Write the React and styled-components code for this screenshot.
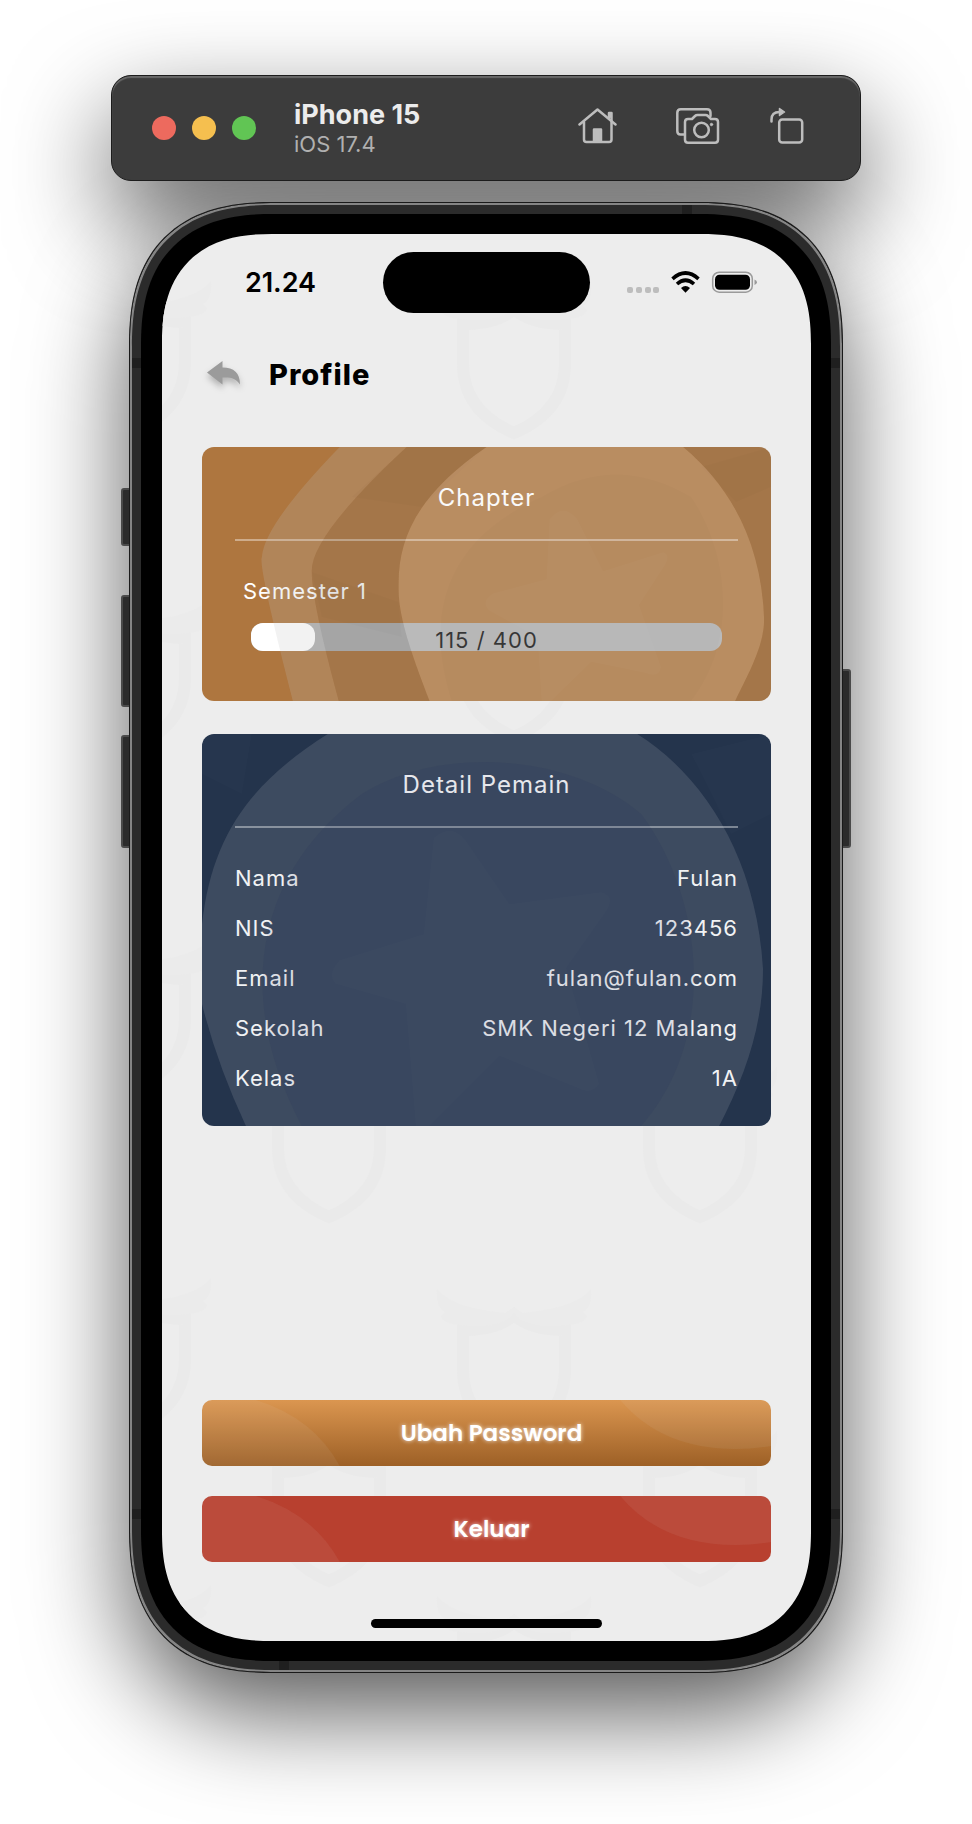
import React from 'react';
import styled, { createGlobalStyle } from 'styled-components';

const Global = createGlobalStyle`
  *, *::before, *::after { box-sizing: border-box; }
  body { margin: 0; background: #fff; font-family: Inter, "Liberation Sans", sans-serif; }
  button { font: inherit; border: 0; padding: 0; background: none; cursor: pointer; }
`;

const Page = styled.main`
  display: flex;
  flex-direction: column;
  align-items: center;
  gap: 21px;
  min-height: 100vh;
  padding: 75px 109px 151px 109px;
  overflow: hidden;
`;

const Toolbar = styled.header`
  position: relative;
  display: flex;
  align-items: center;
  align-self: stretch;
  height: 106px;
  margin: 0 2px;
  padding: 0 56px 0 40px;
  border-radius: 20px;
  border: 1px solid #1c1c1c;
  background: #3c3c3c;
  box-shadow: inset 0 2px 1px #686868;

  &::before {
    content: '';
    position: absolute;
    z-index: -1;
    inset: 0;
    border-radius: 20px;
    box-shadow: 0 40px 100px rgba(0, 0, 0, 0.66);
  }
`;

const Lights = styled.div`
  display: flex;
  gap: 16px;
`;

const Light = styled.button`
  width: 24px;
  height: 24px;
  border-radius: 50%;
  && { background: ${(p) => p.$color}; }
`;

const DeviceName = styled.div`
  flex: 1;
  margin: 2px 0 0 38px;
`;

const DeviceTitle = styled.h1`
  margin: 0;
  font-size: 27px;
  line-height: 30px;
  font-weight: 700;
  color: #ececec;
`;

const DeviceOs = styled.p`
  margin: 0;
  font-size: 22px;
  line-height: 28px;
  color: #b0b0b0;
`;

const Tools = styled.div`
  display: flex;
  align-items: center;
  gap: 50px;
  padding-bottom: 4px;
`;

const Tool = styled.button`
  display: flex;
  svg { display: block; }
`;

const corner = (radius, continuous) => `
  border-radius: ${radius}px;
  @supports (corner-shape: superellipse(1.3)) {
    border-radius: ${continuous}px;
    corner-shape: superellipse(1.3);
  }
`;

const Phone = styled.section`
  position: relative;
  align-self: stretch;
  margin: 0 20px;
  padding: 11px;
  border: 1px solid #1a1a1a;
  background: #2b2b2b;
  box-shadow: inset 0 0 0 2px #858585;
  ${corner(128, 144)}

  &::before {
    content: '';
    position: absolute;
    z-index: -1;
    inset: 0;
    border-radius: 128px;
    box-shadow: 0 40px 100px rgba(0, 0, 0, 0.66);
  }
`;

const SideKey = styled.span`
  position: absolute;
  z-index: -1;
  ${(p) => p.$side}: -9px;
  top: ${(p) => p.$top}px;
  width: 12px;
  height: ${(p) => p.$height}px;
  border: 2px solid #4a4a4a;
  border-radius: 3px;
  background: #2b2b2b;
`;

const Antenna = styled.span`
  position: absolute;
  background: #1f1f1f;
  ${(p) => p.$edge}: 2px;
  ${(p) => p.$from}: ${(p) => p.$at}px;
  width: ${(p) => (p.$edge === 'top' || p.$edge === 'bottom' ? 10 : 9)}px;
  height: ${(p) => (p.$edge === 'top' || p.$edge === 'bottom' ? 9 : 10)}px;
`;

const Bezel = styled.div`
  position: relative;
  padding: 20px 20px 20px 21px;
  background: #000;
  ${corner(117, 132)}
`;

const Screen = styled.div`
  position: relative;
  z-index: 0;
  display: flex;
  flex-direction: column;
  min-height: 1407px;
  padding: 18px 40px 13px;
  background: #ededed;
  overflow: hidden;
  ${corner(97, 110)}
`;

const Watermark = styled.svg`
  position: absolute;
  z-index: -1;
  inset: 0;
  width: 100%;
  height: 100%;
`;

const StatusBar = styled.div`
  display: grid;
  grid-template-columns: 1fr 207px 1fr;
  align-items: center;
  height: 61px;
`;

const Clock = styled.time`
  justify-self: center;
  padding-right: 24px;
  font-size: 27px;
  line-height: 32px;
  font-weight: 600;
  color: #000;
`;

const Island = styled.div`
  height: 61px;
  border-radius: 31px;
  background: #000;
`;

const StatusIcons = styled.div`
  display: flex;
  align-items: center;
  padding-left: 36px;
`;

const TitleBar = styled.header`
  display: flex;
  align-items: center;
  gap: 28px;
  margin-top: 44px;
  padding-left: 5px;
  height: 36px;
`;

const BackButton = styled.button`
  display: flex;
  padding-bottom: 4px;
  svg { filter: drop-shadow(0 4px 3px rgba(0, 0, 0, 0.25)); overflow: visible; }
`;

const ScreenTitle = styled.h2`
  margin: 0;
  font-size: 29px;
  line-height: 38px;
  font-weight: 800;
  letter-spacing: 1px;
  color: #000;
`;

const Card = styled.section`
  position: relative;
  isolation: isolate;
  overflow: hidden;
  height: ${(p) => p.$height}px;
  margin-top: ${(p) => p.$gap}px;
  padding: 32px 33px;
  border-radius: 12px;
  background: ${(p) => p.$color};
  color: #fff;
  letter-spacing: 1px;
`;

const Art = styled.svg`
  position: absolute;
  z-index: 1;
  inset: 0;
  width: 100%;
  height: 100%;
  pointer-events: none;
`;

const CardTitle = styled.h3`
  margin: 0;
  padding-bottom: 22px;
  border-bottom: 2px solid rgba(255, 255, 255, 0.4);
  font-size: 24px;
  line-height: 38px;
  font-weight: 400;
  text-align: center;
`;

const ChapterBody = styled.div`
  padding: 34px 16px 0;
`;

const ChapterName = styled.div`
  margin-left: -8px;
  font-size: 22px;
  line-height: 32px;
`;

const Track = styled.div`
  position: relative;
  height: 28px;
  margin-top: 16px;
  border-radius: 12px;
  background: #afafaf;
`;

const Fill = styled.div`
  height: 28px;
  border-radius: 12px;
  background: #fff;
`;

const Score = styled.span`
  position: absolute;
  inset: 0;
  font-size: 22px;
  line-height: 34px;
  text-align: center;
  color: #0a0a0a;
`;

const Details = styled.dl`
  margin: 0;
  padding-top: 25px;
  font-size: 22px;
  line-height: 50px;
  color: #f2f3f5;
`;

const DetailRow = styled.div`
  display: flex;
  justify-content: space-between;
  dt, dd { margin: 0; }
`;

const Actions = styled.div`
  display: flex;
  flex-direction: column;
  gap: 30px;
  margin-top: auto;
`;

const Action = styled.button`
  position: relative;
  overflow: hidden;
  height: 66px;
  border-radius: 10px;
  && {
    background: ${(p) => p.$background};
    padding-left: 10px;
    color: #fff;
    font-family: Poppins, Lato, "Liberation Sans", sans-serif;
    font-size: 23px;
    font-weight: 600;
    text-shadow: 0 0 4px rgba(255, 255, 255, 0.8);
  }
`;

const HomeBar = styled.div`
  width: 231px;
  height: 9px;
  margin: 57px auto 0;
  border-radius: 5px;
  background: #000;
`;

const HomeIcon = () => (
  <svg width="40" height="36" viewBox="0 0 40 36" fill="none" stroke="#bdbdbd" strokeWidth="2.5" strokeLinecap="round" strokeLinejoin="round">
    <path d="M1.500 16.500 19.500 1.500 37.500 16.500" />
    <path d="M6 14v17.500q0 2.500 2.500 2.500h22.500q2.500 0 2.500-2.500v-17.500" />
    <path d="M31 9.500v-4.500h2.500v7.500" />
    <path d="M16 21.500h7v12h-7z" fill="#bdbdbd" />
  </svg>
);

const CameraIcon = () => (
  <svg width="52" height="36" viewBox="-8 0 52 36" fill="none" stroke="#bdbdbd" strokeWidth="2.5" strokeLinecap="round" strokeLinejoin="round">
    <path d="M8 26.500h-3.500q-3.200 0-3.200-3.500v-18.200q0-3.500 3.500-3.500h26.200q3.500 0 3.500 3.500v3.200" />
    <path d="M12 11h4l3-3q1-1 2.500-1h8q1.500 0 2.500 1l3 3h4q3 0 3 3v17.700q0 3-3 3h-27q-3 0-3-3v-17.700q0-3 3-3z" />
    <circle cx="25.500" cy="22" r="7.300" />
    <circle cx="35.500" cy="16.500" r="1.200" fill="#bdbdbd" strokeWidth="1" />
  </svg>
);

const RotateIcon = () => (
  <svg width="34" height="38" viewBox="0 0 34 38" fill="none" stroke="#bdbdbd" strokeWidth="2.5" strokeLinecap="round" strokeLinejoin="round">
    <rect x="9.200" y="12.500" width="23" height="23" rx="3" />
    <path d="M1.500 14.500v-2q0-7.500 8-7.500" />
    <path d="M9.500 1.500 14.500 5l-5 3.500z" fill="#bdbdbd" strokeWidth="1.500" />
  </svg>
);

const StatusGlyphs = () => (
  <svg width="131" height="24" viewBox="0 0 131 24" role="img" aria-label="Wi-Fi, baterai penuh">
    <g fill="#bdbdbd">
      <rect x="1" y="16" width="6" height="6" rx="2" />
      <rect x="10" y="16" width="6" height="6" rx="2" />
      <rect x="19" y="16" width="6" height="6" rx="2" />
      <rect x="27" y="16" width="6" height="6" rx="2" />
    </g>
    <g fill="none" stroke="#000" strokeWidth="3.600">
      <path d="M46.500 7.800Q59.500-3.800 72.500 7.800" />
      <path d="M51 13Q59.500 5.500 68 13" />
    </g>
    <path d="M55 17q4.500-4 9 0l-4.500 4.800z" />
    <rect x="86.700" y="1.200" width="39.600" height="20" rx="6.500" fill="none" stroke="#9a9a9a" strokeWidth="1.500" />
    <rect x="89" y="3.800" width="35" height="15" rx="4.500" />
    <path d="M128.500 8.500q2.500 1 2.500 2.800t-2.500 2.800z" fill="#9a9a9a" />
  </svg>
);

const BackIcon = () => (
  <svg width="34" height="25" viewBox="0 0 34 25" fill="#9b9b9b">
    <path d="M0 11.500 15.500 0v6.500C27 6.500 33 12 33 23.500 29 17.500 24 16 15.500 16.500v7z" />
  </svg>
);

const ShieldMark = ({ x, y }) => (
  <g transform={`translate(${x} ${y})`}>
    <path d="M-51 41v40C-51 117-28 138 0 150 28 138 51 117 51 81V41C27 41 11 36 0 26-11 36-27 41-51 41z" fill="none" stroke="#eaeaea" strokeWidth="12" />
    <path d="M-77 0c14 16 36 20 68 24L0 18l9 6c32-4 54-8 68-24 1 13-2 19-8 23l4 4q-2 8-20 9C32 39 10 37 0 24-10 37-32 39-53 36q-18-1-20-9l4-4c-6-4-9-10-8-23z" fill="#ebebeb" />
  </g>
);

const marks = [
  [-28, 47], [352, 49], [-28, 363], [352, 353], [167, 833], [538, 833],
  [-28, 704], [-28, 1044], [352, 1055], [167, 1197], [538, 1197], [-28, 1351], [352, 1362],
];

const details = [
  ['Nama', 'Fulan'],
  ['NIS', '123456'],
  ['Email', 'fulan@fulan.com'],
  ['Sekolah', 'SMK Negeri 12 Malang'],
  ['Kelas', '1A'],
];

const score = 115;
const target = 400;
const fillWidth = 64;

const outer = 'M138 0Q62 78 60 110 56 118 91 254H570V0z';
const band = 'M205 0Q108 90 110 125q0 30 27 129H570V0z';
const disc = 'M285 0C215 48 196 92 197 140 196 170 212 212 228 254H534C550 222 564 196 563 170 560 96 530 40 482 0z';

const ChapterArt = () => (
  <Art viewBox="0 0 570 254" preserveAspectRatio="none" aria-hidden="true">
    <path d={outer + band} fillRule="evenodd" fill="#c1c1c1" fillOpacity=".207" />
    <path d={band + disc} fillRule="evenodd" fill="#7c7c7c" fillOpacity=".18" />
    <path d="M205 0 285 0 220 60 150 50z M110 125 197 155 200 190 120 170z M500 20 570 0V40L535 55z" fillOpacity=".015" />
    <path d={disc} fill="#e8e8e8" fillOpacity=".207" />
    <path d="M340 50C250 90 220 160 250 254H490C540 190 525 100 490 50 440 20 390 20 340 50z" fillOpacity=".01" />
    <path d="M348 72Q362 55 376 72L402 124 462 105Q470 108 464 118L438 158 460 220Q458 232 444 226L390 215 350 254H340L336 190 288 164Q278 154 292 146L345 132z" fill="#fff" fillOpacity=".02" />
  </Art>
);

const PlayerArt = () => (
  <Art viewBox="0 0 570 392" preserveAspectRatio="none" aria-hidden="true">
    <path d="M0 40 40 60 50 0H0z M490 20 570 0V80L530 100z" fill="#fff" fillOpacity=".01" />
    <path d="M126 0C50 48 10 100 0 190V270Q15 330 44 392H518C545 340 562 290 562 235 555 120 500 40 436 0z" fill="#ececec" fillOpacity=".125" />
    <path d="M160 60C40 150 40 280 100 392H440C520 300 500 160 440 80 370 20 240 10 160 60z" fill="#1e2c58" fillOpacity=".1" />
    <path d="M232 104Q250 88 264 106L308 170 400 158Q414 162 406 176L365 234 398 350Q390 362 376 354L298 322 228 392H214L204 270 134 250Q124 240 138 226L222 200z" fill="#fff" fillOpacity=".012" />
  </Art>
);

const ActionArt = () => (
  <Art viewBox="0 0 570 66" preserveAspectRatio="none" fill="#e0e0e0" fillOpacity="0.07" aria-hidden="true">
    <path d="M0 0H54Q112 18 138 66H0z" />
    <path d="M419 0Q460 49 535 49 553 49 570 46V0z" />
  </Art>
);

export default function App() {
  return (
    <>
      <Global />
      <Page>
        <Toolbar>
          <Lights>
            <Light $color="#ed6a5e" aria-label="Close" />
            <Light $color="#f5bf4f" aria-label="Minimize" />
            <Light $color="#61c554" aria-label="Zoom" />
          </Lights>
          <DeviceName>
            <DeviceTitle>iPhone 15</DeviceTitle>
            <DeviceOs>iOS 17.4</DeviceOs>
          </DeviceName>
          <Tools>
            <Tool aria-label="Home"><HomeIcon /></Tool>
            <Tool aria-label="Screenshot"><CameraIcon /></Tool>
            <Tool aria-label="Rotate"><RotateIcon /></Tool>
          </Tools>
        </Toolbar>

        <Phone>
          <SideKey $side="left" $top={285} $height={58} />
          <SideKey $side="left" $top={392} $height={112} />
          <SideKey $side="left" $top={532} $height={113} />
          <SideKey $side="right" $top={466} $height={179} />
          <Antenna $edge="top" $from="right" $at={150} />
          <Antenna $edge="left" $from="top" $at={155} />
          <Antenna $edge="right" $from="top" $at={155} />
          <Antenna $edge="left" $from="bottom" $at={153} />
          <Antenna $edge="right" $from="bottom" $at={153} />
          <Antenna $edge="bottom" $from="left" $at={149} />
          <Bezel>
            <Screen>
              <Watermark aria-hidden="true">
                {marks.map(([x, y]) => <ShieldMark key={`${x},${y}`} x={x} y={y} />)}
              </Watermark>
              <StatusBar>
                <Clock>21.24</Clock>
                <Island />
                <StatusIcons><StatusGlyphs /></StatusIcons>
              </StatusBar>

              <TitleBar>
                <BackButton aria-label="Kembali"><BackIcon /></BackButton>
                <ScreenTitle>Profile</ScreenTitle>
              </TitleBar>

              <Card $color="#ae763f" $height={254} $gap={54}>
                <ChapterArt />
                <CardTitle>Chapter</CardTitle>
                <ChapterBody>
                  <ChapterName id="semester">Semester 1</ChapterName>
                  <Track role="progressbar" aria-labelledby="semester" aria-valuenow={score} aria-valuemax={target}>
                    <Fill style={{ width: fillWidth }} />
                    <Score>{score} / {target}</Score>
                  </Track>
                </ChapterBody>
              </Card>

              <Card $color="#24344c" $height={392} $gap={33}>
                <PlayerArt />
                <CardTitle>Detail Pemain</CardTitle>
                <Details>
                  {details.map(([name, value]) => (
                    <DetailRow key={name}>
                      <dt>{name}</dt>
                      <dd>{value}</dd>
                    </DetailRow>
                  ))}
                </Details>
              </Card>

              <Actions>
                <Action $background="linear-gradient(#db9650, #9d6026)"><ActionArt />Ubah Password</Action>
                <Action $background="#b8402f"><ActionArt />Keluar</Action>
              </Actions>
              <HomeBar />
            </Screen>
          </Bezel>
        </Phone>
      </Page>
    </>
  );
}
